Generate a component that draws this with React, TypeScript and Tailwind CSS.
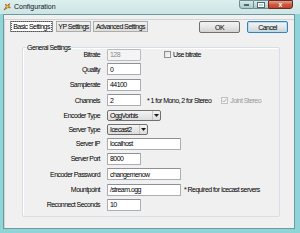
import React from 'react';

const TextBox = ({ value, width, disabled }: { value: string; width: string; disabled?: boolean }) => (
  <div
    className={`${width} h-[12px] flex items-center pl-[2px] border rounded-[1px] ${
      disabled ? 'bg-[#f4f4f4] border-[#b8bcc0] text-[#8a8a8a]' : 'bg-white border-[#abadb3] border-t-[#8e9096] text-black'
    }`}
  >
    {value}
  </div>
);

const Combo = ({ value, width }: { value: string; width: string }) => (
  <div className={`${width} h-[11px] flex items-stretch border border-[#707070] rounded-[2px] bg-linear-to-b from-[#f4f4f4] to-[#dcdcdc]`}>
    <div className="flex-1 flex items-center pl-[2px]">{value}</div>
    <div className="w-[8px] flex items-center justify-center border-l border-[#c6c6c6]">
      <svg width="5" height="3" viewBox="0 0 5 3">
        <path d="M0 0h5L2.5 3z" fill="#1a1a1a" />
      </svg>
    </div>
  </div>
);

const CheckBox = ({ checked, disabled }: { checked?: boolean; disabled?: boolean }) => (
  <div
    className={`w-[7px] h-[7px] border flex items-center justify-center ${
      disabled ? 'border-[#c2c2c2] bg-[#f4f4f4]' : 'border-[#8f8f8f] bg-linear-to-br from-[#dedede] to-white'
    }`}
  >
    {checked && (
      <svg width="5" height="5" viewBox="0 0 5 5">
        <path d="M0.5 2.5l1.4 1.5L4.5 0.8" fill="none" stroke="#a8a8a8" strokeWidth="0.9" />
      </svg>
    )}
  </div>
);

const Row = ({ label, h, children }: { label: string; h: string; children: React.ReactNode }) => (
  <div className={`flex items-center ${h}`}>
    <div className="w-[78px] text-right pr-[1px]">{label}</div>
    <div className="ml-[6px] flex items-center">{children}</div>
  </div>
);

const Button = ({ label, def, width }: { label: string; def?: boolean; width: string }) => (
  <div
    className={`${width} h-[12px] flex items-center justify-center rounded-[2px] border bg-linear-to-b from-[#f3f3f3] via-[#e6e6e6] to-[#d2d2d2] ${
      def ? 'border-[#3c7fb1] shadow-[inset_0_0_0_1px_#aee0f8]' : 'border-[#707070]'
    }`}
  >
    {label}
  </div>
);

export default function App() {
  return (
    <div className="w-[300px] h-[233px] bg-[#8fd4d6] flex flex-col overflow-hidden whitespace-nowrap font-['Liberation_Sans',sans-serif] text-[7px] tracking-[-0.55px] leading-none text-black">
      {/* title bar */}
      <div className="h-[14px] flex bg-linear-to-b from-[#dcefef] to-[#cce5e6] pl-[3px]">
        <div className="flex items-center gap-[3px] h-[13px]">
          <svg width="8" height="8" viewBox="0 0 8 8">
            <path d="M1 7L3.2 3.4 2.4 1.2 4.4 2.4 6.6 0.6 5.8 3 7.4 4.8 4.9 4.6z" fill="#e8951f" stroke="#8a4a0c" strokeWidth="0.6" />
            <circle cx="4.4" cy="3.6" r="0.9" fill="#ffd36a" />
          </svg>
          <span className="text-[7px] tracking-[0px] text-[#111]">Configuration</span>
        </div>
        <div className="ml-auto mr-[7px] flex h-[9px]">
          <div className="w-[15px] border border-[#6b8d90] rounded-bl-[3px] bg-linear-to-b from-[#d6e8e9] to-[#a9c9cb] flex items-end justify-center pb-[2px]">
            <div className="w-[5px] h-[2px] bg-white border border-[#4d6a6c]" />
          </div>
          <div className="w-[14px] border-y border-[#6b8d90] bg-linear-to-b from-[#d6e8e9] to-[#a9c9cb] flex items-center justify-center">
            <div className="w-[6px] h-[4px] border border-white outline outline-[0.5px] outline-[#4d6a6c]" />
          </div>
          <div className="w-[25px] border border-[#6b2a1e] rounded-br-[3px] bg-linear-to-b from-[#e2a090] via-[#cf5a42] to-[#c0402a] flex items-center justify-center">
            <span className="font-bold text-[7px] tracking-[0px] text-white">x</span>
          </div>
        </div>
      </div>

      {/* client area */}
      <div className="ml-[3px] w-[292px] h-[215px] bg-[#f0f0f0] border border-[#6f9a9c] flex flex-col pt-[4px]">
        <div className="flex-1 border-t border-l border-[#d0d4d4] flex flex-col">
          <div className="flex items-start pt-[1px] pl-[5px]">
            <div className="w-[43px] h-[11px] border border-[#8a8a8a] bg-white flex items-center justify-center">
              <div className="px-[1px] py-[1px] border border-dotted border-[#555]">Basic Settings</div>
            </div>
            <div className="ml-[3px] w-[35px] h-[11px] border border-[#acacac] bg-linear-to-b from-[#f2f2f2] to-[#dedede] flex items-center justify-center">
              YP Settings
            </div>
            <div className="ml-[2px] w-[55px] h-[11px] border border-[#acacac] bg-linear-to-b from-[#f2f2f2] to-[#dedede] flex items-center justify-center">
              Advanced Settings
            </div>
            <div className="ml-auto flex gap-[7px] mr-[6px]">
              <Button label="OK" width="w-[41px]" />
              <Button label="Cancel" width="w-[41px]" def />
            </div>
          </div>

          {/* group box */}
          <div className="relative ml-[17px] mt-[14px] w-[258px] h-[170px] border border-[#d5dfe5] rounded-[2px] shadow-[inset_1px_1px_0_white] flex flex-col">
            <div className="absolute -top-[4px] left-[3px] px-[1px] bg-[#f0f0f0]">General Settings</div>
            <Row label="Bitrate" h="h-[13px]">
              <TextBox value="128" width="w-[34px]" disabled />
              <div className="ml-[23px] flex items-center gap-[2px]">
                <CheckBox />
                <span>Use bitrate</span>
              </div>
            </Row>
            <Row label="Quality" h="h-[16px]">
              <TextBox value="0" width="w-[34px]" />
            </Row>
            <Row label="Samplerate" h="h-[15px]">
              <TextBox value="44100" width="w-[34px]" />
            </Row>
            <Row label="Channels" h="h-[16px]">
              <TextBox value="2" width="w-[34px]" />
              <span className="ml-[6px]">* 1 for Mono, 2 for Stereo</span>
              <div className="ml-[10px] flex items-center gap-[2px] text-[#9a9a9a]">
                <CheckBox checked disabled />
                <span>Joint Stereo</span>
              </div>
            </Row>
            <Row label="Encoder Type" h="h-[14px]">
              <Combo value="OggVorbis" width="w-[54px]" />
            </Row>
            <Row label="Server Type" h="h-[14px]">
              <Combo value="Icecast2" width="w-[41px]" />
            </Row>
            <Row label="Server IP" h="h-[15px]">
              <TextBox value="localhost" width="w-[74px]" />
            </Row>
            <Row label="Server Port" h="h-[15px]">
              <TextBox value="8000" width="w-[34px]" />
            </Row>
            <Row label="Encoder Password" h="h-[16px]">
              <TextBox value="changemenow" width="w-[74px]" />
            </Row>
            <Row label="Mountpoint" h="h-[15px]">
              <TextBox value="/stream.ogg" width="w-[74px]" />
              <span className="ml-[3px]">* Required for Icecast servers</span>
            </Row>
            <Row label="Reconnect Seconds" h="h-[15px]">
              <TextBox value="10" width="w-[34px]" />
            </Row>
          </div>
        </div>
      </div>
    </div>
  );
}
